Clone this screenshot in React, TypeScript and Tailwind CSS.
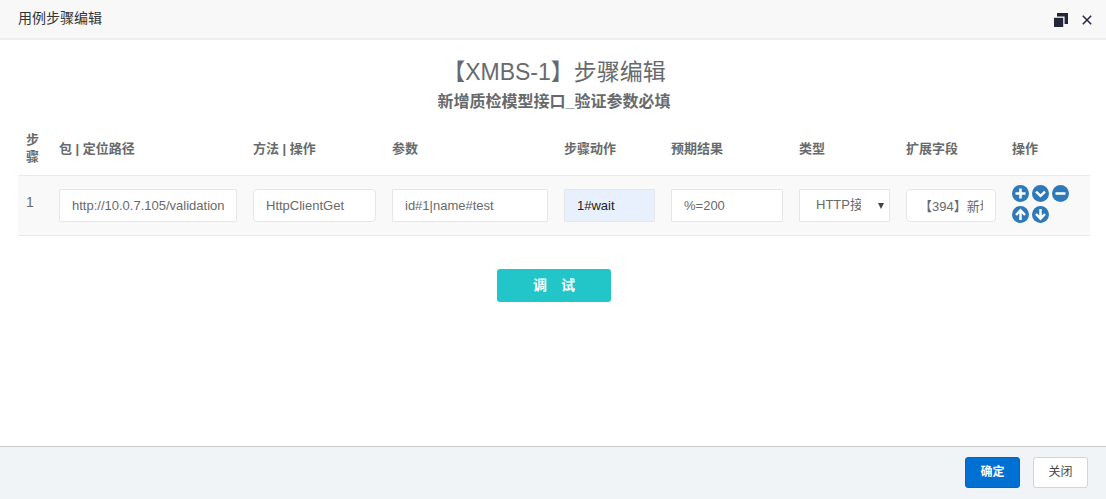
import { useState, type ReactNode } from "react";

const COLUMNS = [
  { label: "步骤", width: "w-[33px]" },
  { label: "包 | 定位路径", width: "w-[194px]" },
  { label: "方法 | 操作", width: "w-[139px]" },
  { label: "参数", width: "w-[172px]" },
  { label: "步骤动作", width: "w-[107px]" },
  { label: "预期结果", width: "w-[128px]" },
  { label: "类型", width: "w-[107px]" },
  { label: "扩展字段", width: "w-[106px]" },
  { label: "操作", width: "w-[86px]" },
];

function RestoreIcon() {
  return (
    <svg viewBox="0 0 14 14" fill="currentColor" className="h-3.5 w-3.5" aria-hidden>
      <path d="M3 0h11v11h-3.4V3.4H3z" />
      <rect x="0" y="4.8" width="9.2" height="9.2" />
    </svg>
  );
}

function CloseIcon() {
  return (
    <svg
      viewBox="0 0 10 10"
      fill="none"
      stroke="currentColor"
      strokeWidth="1.5"
      className="h-2.5 w-2.5"
      aria-hidden
    >
      <path d="M.8.8l8.4 8.4M9.2.8L.8 9.2" />
    </svg>
  );
}

function RoundButton({ label, children }: { label: string; children: ReactNode }) {
  return (
    <button
      type="button"
      aria-label={label}
      className="h-[17px] w-[17px] cursor-pointer rounded-full text-[#2e79b9] hover:text-[#23527c]"
    >
      <svg viewBox="0 0 17 17" className="block h-full w-full" aria-hidden>
        <circle cx="8.5" cy="8.5" r="8.5" fill="currentColor" />
        <g fill="none" stroke="#fff" strokeWidth="2.5">
          {children}
        </g>
      </svg>
    </button>
  );
}

function Field({
  label,
  value,
  onChange,
  className = "rounded-[1px] bg-white",
}: {
  label: string;
  value: string;
  onChange: (value: string) => void;
  className?: string;
}) {
  return (
    <input
      type="text"
      aria-label={label}
      value={value}
      onChange={(e) => onChange(e.target.value)}
      className={`block h-[33px] w-full border border-[#e5e6e7] px-3 text-[13px] outline-none focus:border-[#1ab394] ${className}`}
    />
  );
}

export default function App() {
  const [step, setStep] = useState({
    path: "http://10.0.7.105/validation",
    method: "HttpClientGet",
    params: "id#1|name#test",
    action: "1#wait",
    expected: "%=200",
    type: "http",
    extra: "【394】新增质检模型接口",
  });

  const update = (key: keyof typeof step) => (value: string) =>
    setStep((s) => ({ ...s, [key]: value }));

  return (
    <div className="flex min-h-screen flex-col bg-white font-['Liberation_Sans','Noto_Sans_CJK_SC',sans-serif] text-[#676a6c]">
      <header className="flex h-10 shrink-0 items-center justify-between border-b-2 border-[#eee] bg-[#f8f8f8] pr-3.5 pl-[18px] text-[#333]">
        <span className="pb-0.5 text-sm">用例步骤编辑</span>
        <div className="flex items-center gap-3.5 pt-0.5 text-[#23253a]">
          <button type="button" aria-label="还原" className="cursor-pointer">
            <RestoreIcon />
          </button>
          <button type="button" aria-label="关闭窗口" className="cursor-pointer">
            <CloseIcon />
          </button>
        </div>
      </header>

      <main className="flex-1 px-4 pt-4 pl-[18px]">
        <h1 className="text-center text-[23px] leading-8">【XMBS-1】步骤编辑</h1>
        <h2 className="mt-0.5 text-center text-base leading-6 font-bold">
          新增质检模型接口_验证参数必填
        </h2>

        <table className="mt-2 w-full table-fixed border-collapse">
          <colgroup>
            {COLUMNS.map((c) => (
              <col key={c.label} className={c.width} />
            ))}
          </colgroup>
          <thead>
            <tr className="h-[53px] border-b border-[#e7eaec]">
              {COLUMNS.map((c) => (
                <th
                  key={c.label}
                  scope="col"
                  className="px-2 text-left text-[13px] leading-[17px] font-bold"
                >
                  {c.label}
                </th>
              ))}
            </tr>
          </thead>
          <tbody>
            <tr className="h-15 border-b border-[#e7eaec] bg-[#f9f9f9]">
              <td className="px-2 pt-4 align-top text-sm">1</td>
              <td className="px-2">
                <Field label="包 | 定位路径" value={step.path} onChange={update("path")} />
              </td>
              <td className="px-2">
                <Field
                  label="方法 | 操作"
                  value={step.method}
                  onChange={update("method")}
                  className="rounded bg-white"
                />
              </td>
              <td className="px-2">
                <Field label="参数" value={step.params} onChange={update("params")} />
              </td>
              <td className="px-2">
                <Field
                  label="步骤动作"
                  value={step.action}
                  onChange={update("action")}
                  className="rounded-[1px] bg-[#e8f0fe] text-[#222]"
                />
              </td>
              <td className="px-2">
                <Field label="预期结果" value={step.expected} onChange={update("expected")} />
              </td>
              <td className="px-2">
                <div className="relative">
                  <select
                    aria-label="类型"
                    value={step.type}
                    onChange={(e) => update("type")(e.target.value)}
                    className="block h-[33px] w-full appearance-none rounded-[1px] border border-[#e5e6e7] bg-white pr-7 pl-4 text-[13px] outline-none"
                  >
                    <option value="http">HTTP接口</option>
                    <option value="web">Web UI</option>
                  </select>
                  <svg
                    viewBox="0 0 6 6"
                    fill="#444"
                    className="pointer-events-none absolute top-3.5 right-1.5 h-1.5 w-1.5"
                    aria-hidden
                  >
                    <path d="M0 0h6L3 6z" />
                  </svg>
                </div>
              </td>
              <td className="px-2">
                <Field
                  label="扩展字段"
                  value={step.extra}
                  onChange={update("extra")}
                  className="rounded bg-white"
                />
              </td>
              <td className="px-2 pb-0.5">
                <div className="flex flex-wrap gap-x-[3px] gap-y-1">
                  <RoundButton label="添加">
                    <path d="M8.5 3.5v10M3.5 8.5h10" />
                  </RoundButton>
                  <RoundButton label="展开">
                    <path d="M4 6.6l4.5 4.2L13 6.6" />
                  </RoundButton>
                  <RoundButton label="删除">
                    <path d="M3.5 8.5h10" />
                  </RoundButton>
                  <RoundButton label="上移">
                    <path d="M8.5 4.5v9.5M4 9l4.5-4.6L13 9" />
                  </RoundButton>
                  <RoundButton label="下移">
                    <path d="M8.5 3v9.5M4 8l4.5 4.6L13 8" />
                  </RoundButton>
                </div>
              </td>
            </tr>
          </tbody>
        </table>

        <div className="mt-[33px] flex justify-center">
          <button
            type="button"
            className="h-[33px] w-[114px] cursor-pointer rounded-[3px] bg-[#23c6c8] text-sm font-bold text-white hover:bg-[#21b9bb]"
          >
            调　试
          </button>
        </div>
      </main>

      <footer className="flex h-[53px] shrink-0 items-center justify-end gap-[13px] border-t border-[#c8cbce] bg-[#f0f4f7] px-[18px] pb-0.5 text-xs">
        <button
          type="button"
          className="h-[31px] w-[55px] cursor-pointer rounded-[3px] border border-[#0067c0] bg-[#0070d2] font-bold text-white"
        >
          确定
        </button>
        <button
          type="button"
          className="h-[31px] w-[55px] cursor-pointer rounded-[3px] border border-[#d0d4dc] bg-white text-[#444]"
        >
          关闭
        </button>
      </footer>
    </div>
  );
}
